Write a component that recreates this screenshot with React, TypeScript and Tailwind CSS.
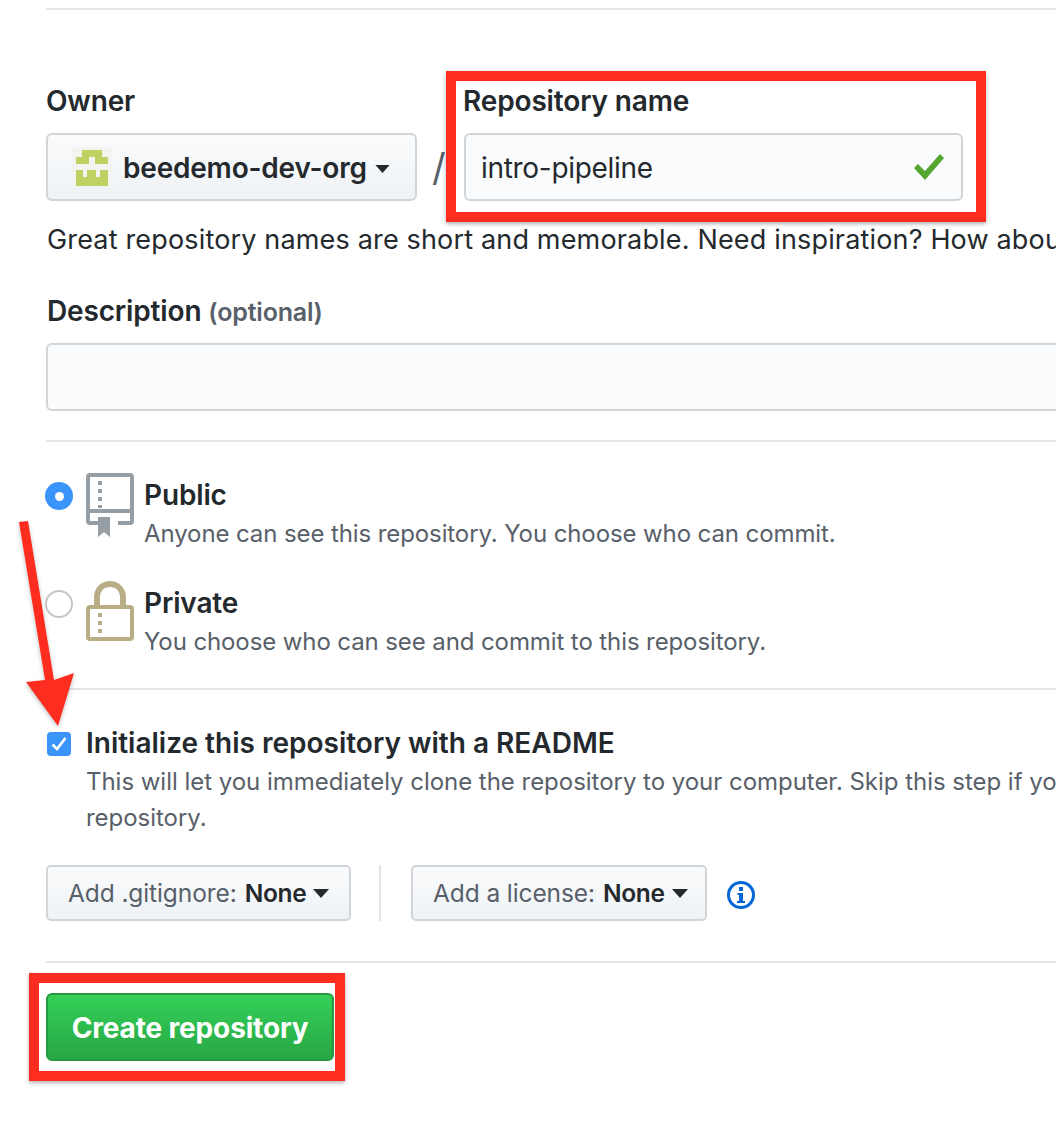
import type { ReactNode } from 'react'

const FONT = "font-['Inter','Liberation_Sans',sans-serif]"
const LABEL = 'text-[28px] leading-[44px] font-semibold tracking-[-0.15px] text-[#24292e]'
const NOTE = 'text-[24px] leading-[36px] text-[#586069] whitespace-nowrap'

function Caret({ className }: { className: string }) {
  return (
    <svg className={className} viewBox="0 0 16 9" fill="currentColor">
      <path d="M0 0h16L8 9z" />
    </svg>
  )
}

function SelectButton({ label, width }: { label: string; width: string }) {
  return (
    <div className={`${width} h-14 flex items-center pl-[20px] rounded-[5px] border-2 border-[#d1d5da] bg-gradient-to-b from-[#fafbfc] to-[#eff3f6] text-[24.5px] tracking-[-0.1px] text-[#586069]`}>
      {label}
      <span className="ml-[8px] tracking-[-0.3px] font-semibold text-[#24292e]">None</span>
      <Caret className="ml-[7px] w-[16px] h-[9px] text-[#24292e]" />
    </div>
  )
}

function VisibilityOption({ icon, radio, title, text, className }: { icon: ReactNode; radio: ReactNode; title: string; text: string; className: string }) {
  return (
    <div className={`flex items-start ${className}`}>
      <div className="w-[40px] pt-[9px] ml-[-1px]">{radio}</div>
      <div className="w-[58px] h-[66px] ml-[1px] shrink-0">{icon}</div>
      <div>
        <div className={LABEL}>{title}</div>
        <div className={`mt-[-1px] tracking-[-0.1px] ${NOTE}`}>{text}</div>
      </div>
    </div>
  )
}

export default function App() {
  return (
    <div className={`relative w-[1056px] h-[1122px] overflow-hidden bg-white ${FONT}`}>
      <div className="pl-[46px] pt-[8px]">
        <div className="h-[2px] bg-[#e1e4e8]" />

        <div className="flex mt-[69px]">
          <div className="w-[371px]">
            <div className={LABEL}>Owner</div>
            <div className="mt-[10px] h-[68px] flex items-center pl-[24px] rounded-[6px] border-2 border-[#d1d5da] bg-gradient-to-b from-[#fafbfc] to-[#eff3f6]">
              <svg className="w-10 h-10 shrink-0 rounded-[3px] bg-[#f3f4f0]" viewBox="0 0 40 40">
                <path fill="#bfd163" fillRule="evenodd" d="M10 3h20v7h6v7H4v-7h6zM17 10v7h6v-7zM4 23h7v7h4v-7h9v7h4v-7h8v16H4z" />
              </svg>
              <span className="ml-[11px] pt-[2px] text-[28px] font-semibold tracking-[-0.2px] text-[#24292e]">beedemo-dev-org</span>
              <Caret className="ml-[8px] mt-[3px] w-[15px] h-[8px] text-[#24292e]" />
            </div>
          </div>
          <div className="w-[47px] mt-[54px] pl-[15px] text-[38px] leading-[68px] text-[#586069]">/</div>
          <div className="w-[499px]">
            <div className={`ml-[-1px] ${LABEL}`}>Repository name</div>
            <div className="mt-[10px] h-[68px] flex items-center justify-between pl-[15px] pr-[17px] rounded-[6px] border-2 border-[#d1d5da] bg-[#fafbfc]">
              <span className="pt-[2px] text-[28px] tracking-[-0.3px] text-[#24292e]">intro-pipeline</span>
              <svg className="w-[30px] h-[26px]" viewBox="0 0 30 26" fill="#55a532">
                <path d="M0 14l4-4 7 7L26 0l4 4-19 22z" />
              </svg>
            </div>
          </div>
        </div>

        <p className="mt-[17px] ml-[1px] text-[27px] leading-[44px] tracking-[0.165px] text-[#24292e] whitespace-nowrap">
          Great repository names are short and memorable. Need inspiration? How about upright-octo-broccoli?
        </p>

        <div className={`mt-[27px] ml-[1px] ${LABEL}`}>
          Description <span className="text-[25px] tracking-[-0.2px] text-[#586069]">(optional)</span>
        </div>
        <div className="mt-[9px] h-[68px] rounded-l-[6px] border-2 border-r-0 border-[#d1d5da] bg-[#fafbfc]" />

        <div className="mt-[29px] h-[2px] bg-[#e1e4e8]" />

        <VisibilityOption
          className="mt-[31px]"
          radio={
            <div className="w-[28px] h-[28px] rounded-full bg-[#3b94fa] flex items-center justify-center">
              <div className="w-[9px] h-[9px] rounded-full bg-white" />
            </div>
          }
          icon={
            <svg className="w-[48px] h-[64px]" viewBox="0 0 48 64" fill="#959da5">
              <path fillRule="evenodd" d="M4 0h40a4 4 0 0 1 4 4v44a4 4 0 0 1-4 4H32v-4h12v-8H4v8h8v4H4a4 4 0 0 1-4-4V4a4 4 0 0 1 4-4zm0 4v32h40V4z" />
              <path d="M12 44h12v20l-6-5-6 5zM12 8h4v4h-4zM12 16h4v4h-4zM12 24h4v4h-4zM12 32h4v3h-4z" />
            </svg>
          }
          title="Public"
          text="Anyone can see this repository. You choose who can commit."
        />

        <VisibilityOption
          className="mt-[29px]"
          radio={
            <div className="w-[28px] h-[28px] rounded-full border-2 border-[#c6c6c6] bg-white" />
          }
          icon={
            <svg className="w-[48px] h-[60px]" viewBox="0 0 48 60" fill="#b9ad86">
              <path fillRule="evenodd" d="M24 0c9 0 16 7 16 16v8h4a4 4 0 0 1 4 4v28a4 4 0 0 1-4 4H4a4 4 0 0 1-4-4V28a4 4 0 0 1 4-4h4v-8C8 7 15 0 24 0zm0 6c-6 0-10 4-10 10v8h20v-8c0-6-4-10-10-10zM4 28v28h40V28z" />
              <path d="M12 32h4v4h-4zM12 40h4v4h-4zM12 48h4v4h-4z" />
            </svg>
          }
          title="Private"
          text="You choose who can see and commit to this repository."
        />

        <div className="mt-[28px] h-[2px] bg-[#e1e4e8]" />

        <div className="flex items-start mt-[31px]">
          <div className="w-[40px] shrink-0 pt-[11px]">
            <div className="ml-[1px] w-[24px] h-[24px] rounded-[4px] bg-[#3b94fa] flex items-center justify-center">
              <svg className="w-[16px] h-[14px]" viewBox="0 0 16 14" fill="none" stroke="white" strokeWidth="2.6">
                <path d="M1.5 7.500l4.500 4.500 8.500-11" />
              </svg>
            </div>
          </div>
          <div>
            <div className="text-[28px] leading-[44px] font-semibold text-[#24292e]">Initialize this repository with a README</div>
            <div className={`mt-[-1px] tracking-[-0.03px] ${NOTE}`}>
              This will let you immediately clone the repository to your computer. Skip this step if you're importing an existing
              <br />
              repository.
            </div>
          </div>
        </div>

        <div className="flex items-center mt-[29px]">
          <SelectButton label="Add .gitignore:" width="w-[305px]" />
          <div className="mx-[28px] w-[2px] h-14 bg-[#e1e4e8]" />
          <div className="ml-[2px]">
            <SelectButton label="Add a license:" width="w-[296px]" />
          </div>
          <svg className="ml-[20px] mt-[4px] w-[28px] h-[28px]" viewBox="0 0 28 28">
            <circle cx="14" cy="14" r="12.500" fill="none" stroke="#0366d6" strokeWidth="3" />
            <path fill="#0366d6" d="M12 6h4v4h-4zM10.500 12H16v8h2v2H10v-2h2v-6h-1.500z" />
          </svg>
        </div>

        <div className="mt-[40px] h-[2px] bg-[#e1e4e8]" />

        <div className="mt-[30px] w-[288px] h-[68px] flex items-center justify-center pt-[2px] rounded-[6px] border-2 border-[#259a41] bg-gradient-to-b from-[#34d058] to-[#28a745] text-[28px] font-bold tracking-[-0.15px] text-white">
          Create repository
        </div>
      </div>

      {/* annotations drawn over the page */}
      <div className="absolute left-[446px] top-[71px] w-[540px] h-[151px] border-[10px] border-[#ff2d1f] shadow-[0_2px_4px_rgba(0,0,0,0.3)]" />
      <div className="absolute left-[29px] top-[973px] w-[316px] h-[108px] border-[10px] border-[#ff2d1f] shadow-[0_2px_4px_rgba(0,0,0,0.3)]" />
      <svg className="absolute left-0 top-[500px] w-[100px] h-[240px]" viewBox="0 0 100 240">
        <path fill="#ff2d1f" style={{ filter: 'drop-shadow(0 2px 2px rgba(0,0,0,0.25))' }} d="M19 22l9-1 26 159 20-7-16 53-32-44 19-2z" />
      </svg>
    </div>
  )
}
